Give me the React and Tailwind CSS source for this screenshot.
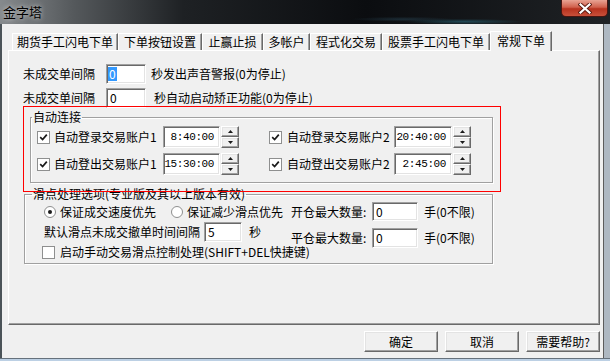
import React from 'react';

// classic 3D edges
const raised = 'border border-t-white border-l-white border-r-[#696969] border-b-[#696969] shadow-[inset_-1px_-1px_0_#a0a0a0,inset_1px_1px_0_#e3e3e3]';
const sunken = 'border border-t-[#a0a0a0] border-l-[#a0a0a0] border-r-white border-b-white shadow-[inset_1px_1px_0_#696969,inset_-1px_-1px_0_#e3e3e3] bg-white';

const tabs = [
    { label: '期货手工闪电下单', w: 'w-[106px]' },
    { label: '下单按钮设置', w: 'w-[84px]' },
    { label: '止赢止损', w: 'w-[61px]' },
    { label: '多帐户', w: 'w-[47px]' },
    { label: '程式化交易', w: 'w-[72px]' },
    { label: '股票手工闪电下单', w: 'w-[108px]' },
];

const Check = ({ checked }) => (
    <span className="w-[13px] h-[13px] shrink-0 border border-[#8e8f8f] bg-white flex items-center justify-center">
        {checked && (
            <svg width="9" height="9" viewBox="0 0 9 9">
                <path d="M1.2 4.2 L3.6 6.6 L7.8 1.6" stroke="#1a1a1a" strokeWidth="1.7" fill="none" />
            </svg>
        )}
    </span>
);

const Radio = ({ checked }) => (
    <span className="w-[12px] h-[12px] shrink-0 rounded-full border border-[#8e8f8f] bg-white flex items-center justify-center">
        {checked && <span className="w-[4px] h-[4px] rounded-full bg-[#1a1a1a]"></span>}
    </span>
);

const Arrow = ({ up }) => (
    <svg width="5" height="3" viewBox="0 0 5 3">
        <path d={up ? 'M2.5 0 L5 3 L0 3Z' : 'M0 0 L5 0 L2.5 3Z'} fill="#1a1a1a" />
    </svg>
);

const Spinner = () => (
    <div className="ml-[1px] w-[18px] h-[22px] flex flex-col">
        <div className={`${raised} h-[11px] bg-[#f0f0f0] flex items-center justify-center`}><Arrow up /></div>
        <div className={`${raised} h-[11px] bg-[#f0f0f0] flex items-center justify-center`}><Arrow /></div>
    </div>
);

const TimeBox = ({ value, w }) => (
    <div className={`${sunken} ${w} h-[22px] flex items-center justify-end pr-[5px] font-['Liberation_Mono',monospace] text-[11px] tracking-[-0.4px]`}>
        {value}
    </div>
);

const AccountRow = ({ className, left, right }) => (
    <div className={`flex items-center h-[22px] pl-[6px] ${className}`}>
        <Check checked />
        <span className="ml-[4px] w-[109px] whitespace-nowrap">{left.label}</span>
        <TimeBox value={left.time} w="w-[57px]" />
        <Spinner />
        <span className="ml-[30px]"><Check checked /></span>
        <span className="ml-[5px] w-[107px] whitespace-nowrap">{right.label}</span>
        <TimeBox value={right.time} w="w-[58px]" />
        <Spinner />
    </div>
);

const Btn = ({ children, isDefault }) => (
    <button
        type="button"
        className={`${raised} ${isDefault ? 'border-r-[#3c3c3c] border-b-[#3c3c3c]' : ''} w-[74px] h-[21px] bg-[#f0f0f0] flex items-center justify-center text-[12px] leading-none`}
    >
        {children}
    </button>
);

export default function App() {
    return (
        <div className="w-[610px] h-[361px] overflow-hidden flex flex-col bg-[#3b4045] font-['Noto_Sans_CJK_SC',sans-serif] text-[12px] text-black leading-none">
            {/* title bar */}
            <div className="h-[24px] shrink-0 flex justify-between items-start bg-[radial-gradient(ellipse_at_76%_90%,rgba(60,170,200,0.35)_0,transparent_9%),radial-gradient(ellipse_at_66%_80%,rgba(70,130,160,0.25)_0,transparent_9%),linear-gradient(90deg,#868a8d_0%,#55595c_12%,#1e2124_30%,#0b0d10_60%,#1f2225_100%)]">
                <span className="pl-[3px] pt-[4px] text-[13px] leading-[16px] text-black [text-shadow:0_0_5px_#ddd]">金字塔</span>
                <button type="button" className="mr-[2px] w-[47px] h-[17px] rounded-b-[5px] border border-t-0 border-[#4a1510] bg-[linear-gradient(180deg,#e8a393_0%,#d0604c_45%,#b7321e_55%,#c8503a_100%)] flex items-center justify-center">
                    <svg width="14" height="11" viewBox="0 0 14 11">
                        <path d="M2.5 1.5 L11.5 9.5 M11.5 1.5 L2.5 9.5" stroke="#5a1a10" strokeWidth="4" strokeLinecap="square" />
                        <path d="M2.5 1.5 L11.5 9.5 M11.5 1.5 L2.5 9.5" stroke="#fff" strokeWidth="2.2" strokeLinecap="square" />
                    </svg>
                </button>
            </div>

            <div className="flex h-[334px] shrink-0">
                <div className="w-[2px] bg-[#4b5358]"></div>
                <div className="w-[601px] bg-[#f0f0f0] flex flex-col pl-[6px] pt-[7px]">
                    {/* tabs */}
                    <div className="h-[19px] flex items-end pl-[4px]">
                        {tabs.map((t) => (
                            <div
                                key={t.label}
                                className={`${t.w} h-[17px] flex items-center justify-center whitespace-nowrap border-t border-l border-r border-t-white border-l-white border-r-[#696969] shadow-[inset_-1px_0_0_#a0a0a0]`}
                            >
                                {t.label}
                            </div>
                        ))}
                        <div className="relative z-10 self-start w-[62px] h-[20px] pb-[2px] bg-[#f0f0f0] flex items-center justify-center whitespace-nowrap border-t border-l border-r border-t-white border-l-white border-r-[#696969] shadow-[inset_-1px_0_0_#a0a0a0]">
                            常规下单
                        </div>
                    </div>

                    {/* tab body */}
                    <div className="relative w-[592px] h-[275px] flex flex-col border border-t-white border-l-white border-r-[#696969] border-b-[#696969] shadow-[inset_-1px_-1px_0_#a0a0a0]">
                        <div className="mt-[13px] ml-[14px] flex items-center h-[20px]">
                            <span className="w-[83px]">未成交单间隔</span>
                            <div className={`${sunken} w-[40px] h-[20px] flex items-center pl-[1px]`}>
                                <span className="bg-[#3399ff] text-white px-[1px] leading-[14px]">0</span>
                            </div>
                            <span className="ml-[5px] whitespace-nowrap">秒发出声音警报(0为停止)</span>
                        </div>
                        <div className="mt-[4px] ml-[14px] flex items-center h-[20px]">
                            <span className="w-[83px]">未成交单间隔</span>
                            <div className={`${sunken} w-[40px] h-[20px] flex items-center pl-[3px]`}>0</div>
                            <span className="ml-[8px] whitespace-nowrap">秒自动启动矫正功能(0为停止)</span>
                        </div>

                        <fieldset className="mt-[1px] ml-[21px] w-[463px] h-[74px] border border-[#a0a0a0] shadow-[inset_1px_1px_0_#fff,1px_1px_0_#fff]">
                            <legend className="ml-[1px] px-[1px] leading-[16px]">自动连接</legend>
                            <AccountRow
                                className="mt-[1px]"
                                left={{ label: '自动登录交易账户1', time: '8:40:00' }}
                                right={{ label: '自动登录交易账户2', time: '20:40:00' }}
                            />
                            <AccountRow
                                className="mt-[5px]"
                                left={{ label: '自动登出交易账户1', time: '15:30:00' }}
                                right={{ label: '自动登出交易账户2', time: '2:45:00' }}
                            />
                        </fieldset>

                        <fieldset className="mt-[3px] ml-[15px] w-[469px] h-[78px] border border-[#a0a0a0] shadow-[inset_1px_1px_0_#fff,1px_1px_0_#fff]">
                            <legend className="ml-[7px] px-[1px] leading-[16px]">滑点处理选项(专业版及其以上版本有效)</legend>
                            <div className="flex">
                                <div className="w-[266px] shrink-0 flex flex-col">
                                    <div className="h-[20px] pl-[19px] flex items-center whitespace-nowrap">
                                        <Radio checked />
                                        <span className="ml-[4px]">保证成交速度优先</span>
                                        <span className="ml-[15px]"><Radio /></span>
                                        <span className="ml-[4px]">保证减少滑点优先</span>
                                    </div>
                                    <div className="h-[20px] pl-[19px] flex items-center whitespace-nowrap">
                                        <span className="w-[160px]">默认滑点未成交撤单时间间隔</span>
                                        <div className={`${sunken} w-[38px] h-[20px] flex items-center pl-[3px]`}>5</div>
                                        <span className="ml-[7px]">秒</span>
                                    </div>
                                    <div className="mt-[1px] h-[18px] pl-[17px] flex items-center whitespace-nowrap">
                                        <Check />
                                        <span className="ml-[5px]">启动手动交易滑点控制处理(SHIFT+DEL快捷键)</span>
                                    </div>
                                </div>
                                <div className="flex flex-col">
                                    <div className="h-[19px] flex items-center whitespace-nowrap">
                                        <span className="w-[81px]">开仓最大数量:</span>
                                        <div className={`${sunken} w-[46px] h-[19px] flex items-center pl-[3px]`}>0</div>
                                        <span className="ml-[6px]">手(0不限)</span>
                                    </div>
                                    <div className="mt-[7px] h-[20px] flex items-center whitespace-nowrap">
                                        <span className="w-[81px]">平仓最大数量:</span>
                                        <div className={`${sunken} w-[46px] h-[20px] flex items-center pl-[3px]`}>0</div>
                                        <span className="ml-[6px]">手(0不限)</span>
                                    </div>
                                </div>
                            </div>
                        </fieldset>

                        {/* red annotation frame */}
                        <div className="absolute left-[14px] top-[55px] w-[478px] h-[86px] border border-[#ff0000] pointer-events-none"></div>
                    </div>

                    {/* buttons */}
                    <div className="mt-[6px] pr-[3px] flex justify-end gap-[7px]">
                        <Btn isDefault>确定</Btn>
                        <Btn>取消</Btn>
                        <Btn>需要帮助?</Btn>
                    </div>
                </div>
                <div className="flex-1 bg-[#aeb8c2] border-l border-[#5c5c5c]"></div>
            </div>
            <div className="h-[3px] bg-[#bcd0e4] border-t border-[#66717c]"></div>
        </div>
    );
}
